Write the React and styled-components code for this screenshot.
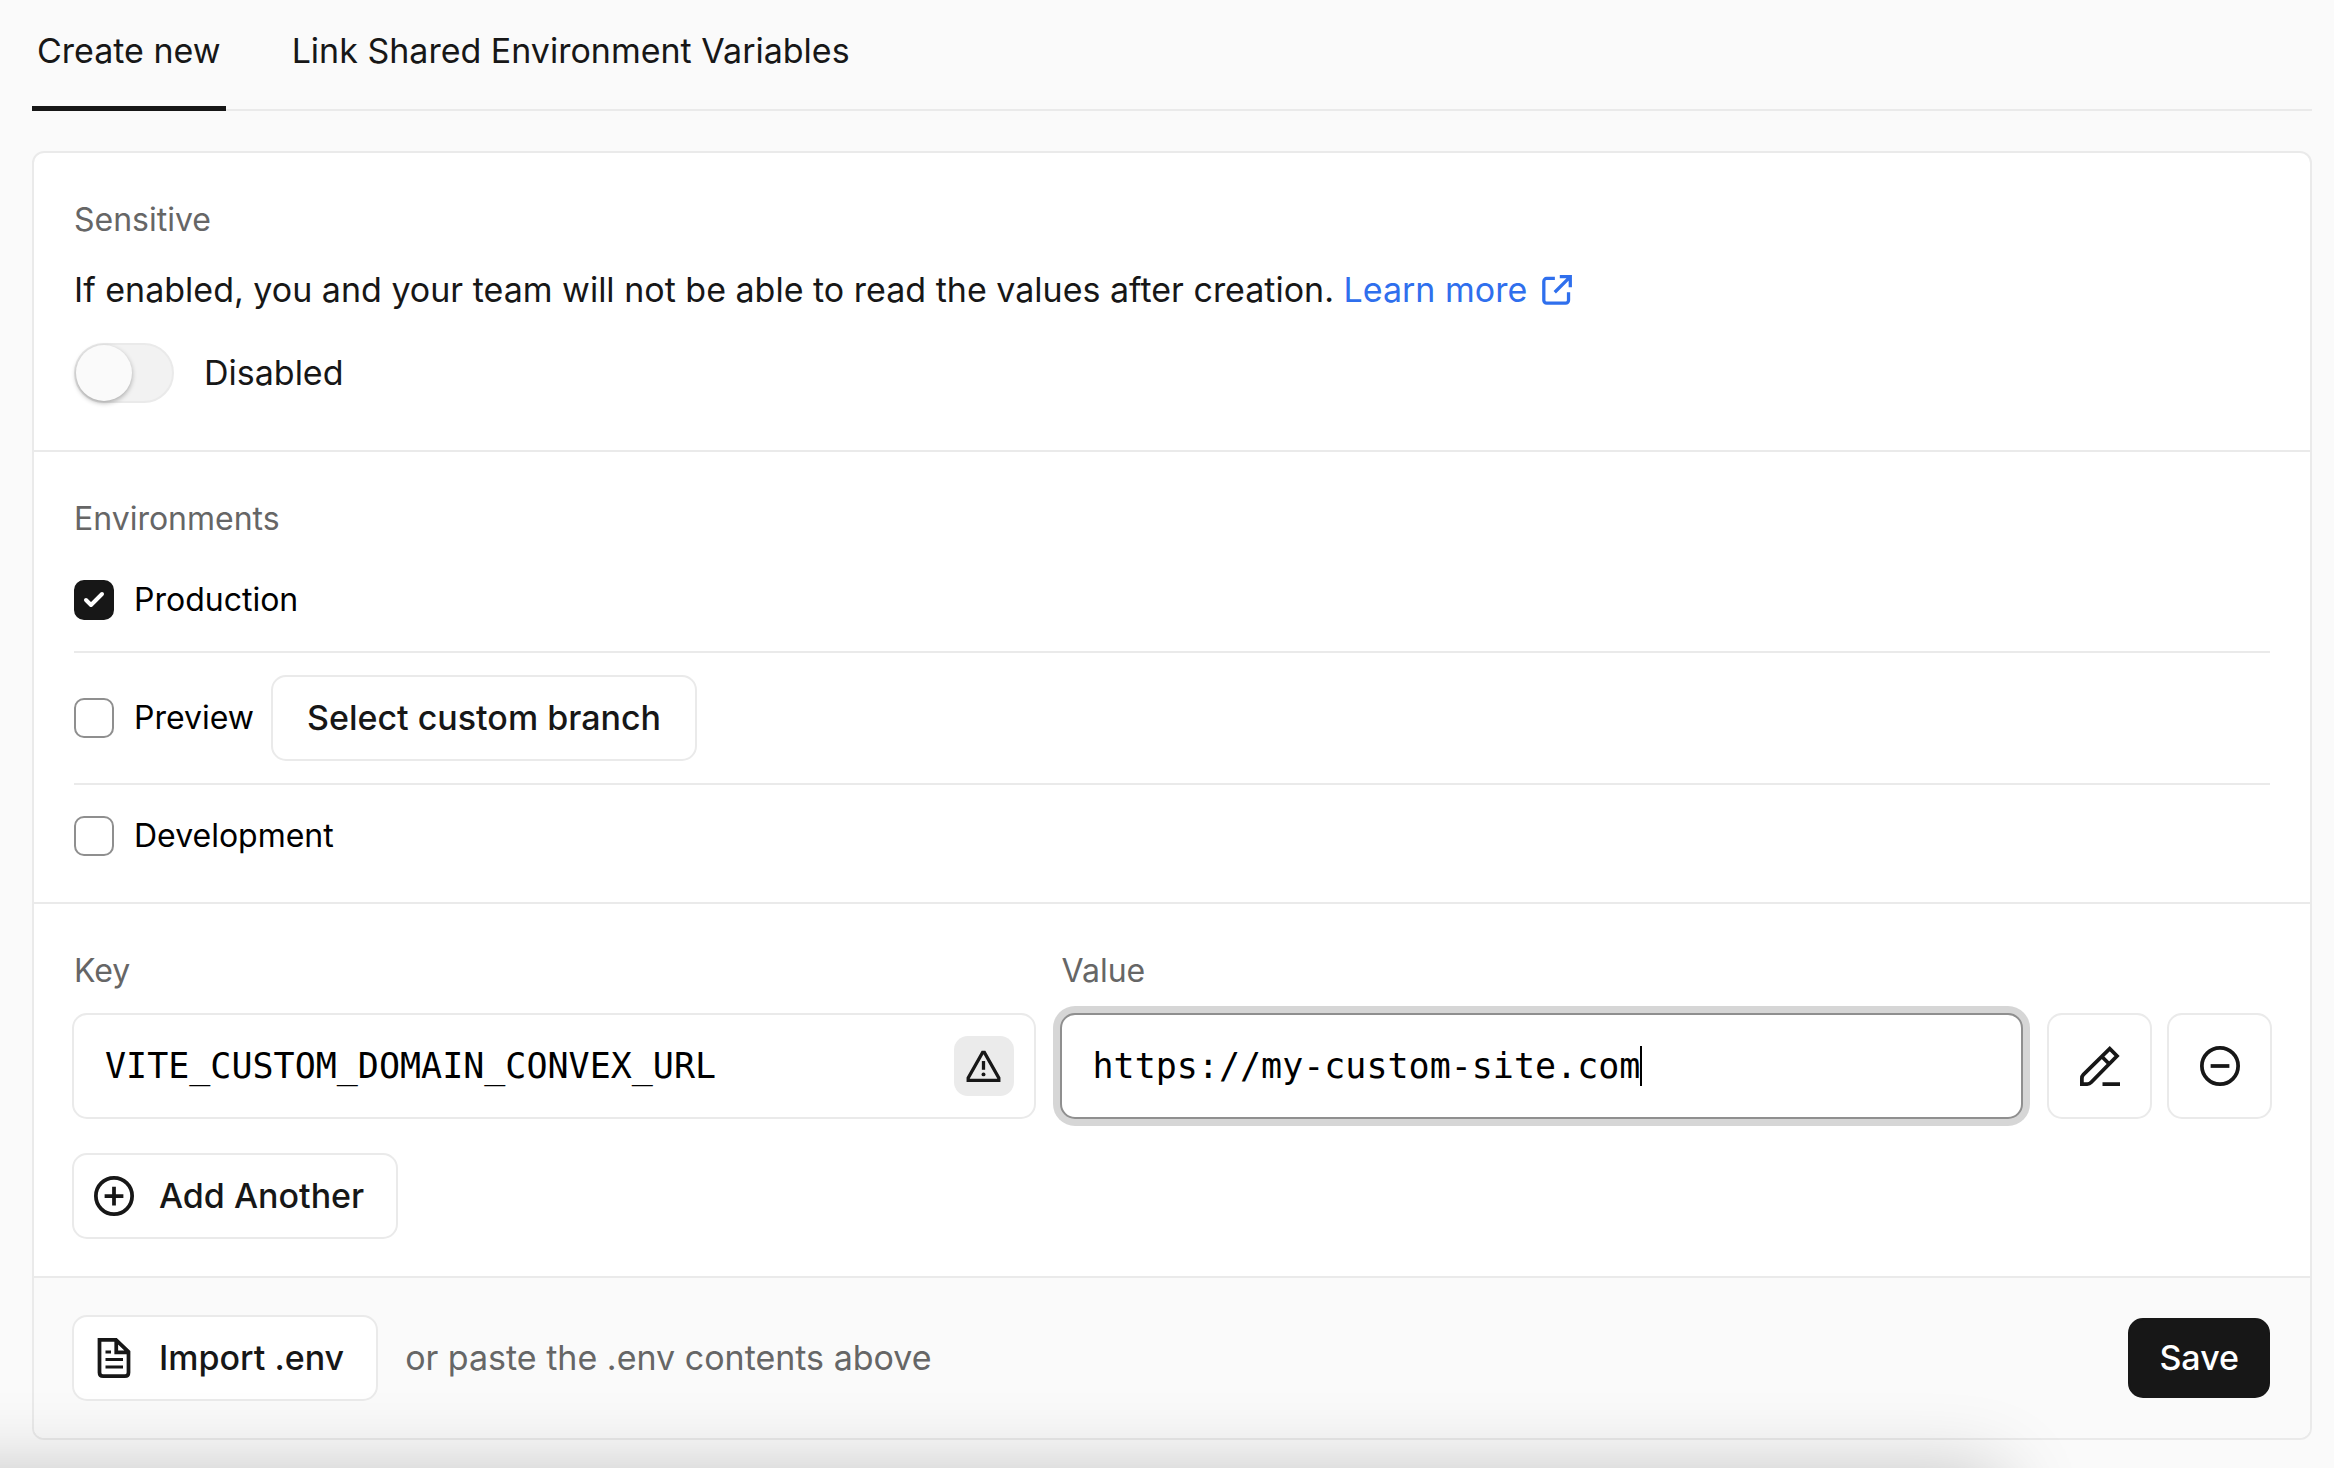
import React, { useState } from "react";
import styled, { createGlobalStyle } from "styled-components";

const sans = `Inter, "Liberation Sans", sans-serif`;
const mono = `"DejaVu Sans Mono", "Liberation Mono", monospace`;

const Global = createGlobalStyle`
  * { box-sizing: border-box; }
  body {
    margin: 0;
    background: #fafafa;
    color: #171717;
    font-family: ${sans};
    font-size: 34px;
    line-height: 50px;
  }
  button, input { font: inherit; color: inherit; }
`;

const Page = styled.main`
  padding: 0 22px 28px 32px;
`;

const Tabs = styled.nav`
  display: flex;
  gap: 61px;
  height: 111px;
  border-bottom: 2px solid #eaeaea;
`;

const Tab = styled.button`
  margin-bottom: -2px;
  padding: 0 5px 5px;
  border: 0;
  border-bottom: 5px solid ${(p) => (p.$active ? "#171717" : "transparent")};
  background: none;
`;

const Card = styled.form`
  margin-top: 40px;
  border: 2px solid #eaeaea;
  border-radius: 12px;
  background: #fff;
  overflow: hidden;
`;

const Section = styled.section`
  padding: 42px ${(p) => p.$side || 40}px ${(p) => p.$bottom}px;
  border-bottom: 2px solid #eaeaea;
`;

const Caption = styled.h2`
  margin: 0;
  color: #666;
  font-size: 32px;
  font-weight: 400;
  line-height: 50px;
`;

const Description = styled.p`
  margin: 20px 0 28px;
`;

const Link = styled.a`
  color: #2f6fed;
  text-decoration: none;

  svg {
    width: 35px;
    height: 35px;
    margin-left: 12px;
    vertical-align: -6px;
  }
`;

const SwitchLabel = styled.label`
  display: flex;
  align-items: center;
  gap: 30px;
  width: max-content;
`;

const Switch = styled.input`
  appearance: none;
  width: 100px;
  height: 60px;
  margin: 0;
  padding: 0;
  border: 2px solid #eaeaea;
  border-radius: 30px;
  background: #f2f2f2;

  &::before {
    content: "";
    display: block;
    width: 56px;
    height: 56px;
    border-radius: 50%;
    background: #fafafa;
    box-shadow: 0 2px 5px rgba(0, 0, 0, 0.3);
  }
  &:checked::before { margin-left: 40px; }
`;

const Environments = styled.ul`
  margin: 5px 0 0;
  padding: 0;
  list-style: none;
`;

const Environment = styled.li`
  box-sizing: content-box;
  display: flex;
  align-items: center;
  gap: 17px;
  height: ${(p) => (p.$tall ? 130 : 102)}px;

  & + & { border-top: 2px solid #eaeaea; }
`;

const CheckLabel = styled.label`
  display: flex;
  align-items: center;
  gap: 20px;
  color: #000;
  font-size: 32px;
`;

const CheckBox = styled.span`
  display: grid;
  width: 40px;
  height: 40px;

  > * { grid-area: 1 / 1; }
  svg { width: 40px; height: 40px; pointer-events: none; }
`;

const CheckInput = styled.input`
  appearance: none;
  width: 40px;
  height: 40px;
  margin: 0;
  border: 2px solid #8f8f8f;
  border-radius: 10px;
  background: #fff;

  &:checked { border-color: #171717; background: #171717; }
`;

const Button = styled.button`
  display: flex;
  align-items: center;
  gap: 25px;
  height: 86px;
  padding: ${(p) => (p.$icon ? "0 32px 0 20px" : "0 34px")};
  border: 2px solid #eaeaea;
  border-radius: 15px;
  background: #fff;
  font-weight: 500;
  white-space: nowrap;

  svg { width: 40px; height: 40px; flex: none; }
`;

const SaveButton = styled(Button)`
  height: 80px;
  margin-left: auto;
  padding: 0 29px;
  border-color: #171717;
  background: #171717;
  color: #fff;
`;

const Variable = styled.div`
  display: flex;
  align-items: flex-end;
  gap: 24px;
  margin-bottom: 34px;
`;

const Column = styled.div`
  display: flex;
  flex: 1 1 0;
  flex-direction: column;
  gap: 17px;
  min-width: 0;
`;

const Actions = styled.div`
  display: flex;
  gap: 15px;
`;

const FieldLabel = styled.label`
  padding-left: 2px;
  color: #666;
  font-size: 32px;
  line-height: 50px;
`;

const Field = styled.div`
  display: flex;
  align-items: center;
  height: 106px;
  padding: 0 20px 0 31px;
  border: 2px solid ${(p) => (p.$focused ? "#8f8f8f" : "#eaeaea")};
  border-radius: 15px;
  background: #fff;
  box-shadow: ${(p) => (p.$focused ? "0 0 0 7px #d6d6d6" : "none")};
`;

const TextInput = styled.input`
  min-width: 0;
  padding: 0;
  border: 0;
  outline: 0;
  background: none;
  color: #000;
  caret-color: transparent;
  font-family: ${mono};
  font-size: 35px;
  field-sizing: ${(p) => (p.$fit ? "content" : "fixed")};
  flex: ${(p) => (p.$fit ? "none" : "1")};
`;

const Caret = styled.span`
  width: 2px;
  height: 40px;
  background: #000;
`;

const Warning = styled.button`
  display: grid;
  flex: none;
  place-items: center;
  width: 60px;
  height: 60px;
  padding: 0;
  border: 0;
  border-radius: 14px;
  background: #ebebeb;

  svg { width: 35px; height: 35px; }
`;

const IconButton = styled(Button)`
  justify-content: center;
  width: 105px;
  height: 106px;
  padding: 0;
`;

const Footer = styled.footer`
  display: flex;
  align-items: center;
  gap: 27px;
  height: 160px;
  padding: 0 40px 0 38px;
  background: #fafafa;
`;

const Hint = styled.span`
  color: #666;
`;

const BottomShade = styled.div`
  position: fixed;
  top: 100%;
  left: -200px;
  right: 332px;
  height: 200px;
  box-shadow: 0 5px 80px rgba(0, 0, 0, 0.23);
  pointer-events: none;
`;

const Icon = ({ children }) => (
  <svg viewBox="0 0 16 16" fill="none" stroke="currentColor" strokeWidth="1.5" aria-hidden="true">
    {children}
  </svg>
);

const ExternalIcon = () => (
  <Icon>
    <path d="M7.25 2.5H3.5a1.3 1.3 0 0 0-1.3 1.3v8.7a1.3 1.3 0 0 0 1.3 1.3h8.7a1.3 1.3 0 0 0 1.3-1.3V8.8M9.5 1.7h4.8v4.8M14 2 7.2 8.8" />
  </Icon>
);
const WarningIcon = () => (
  <Icon>
    <path d="M7.6 1.6h.8L15 13.2v1.1H1v-1.1Z" />
    <path d="M8 5.5v4" />
    <circle cx="8" cy="11.6" r="0.9" fill="currentColor" stroke="none" />
  </Icon>
);
const PencilIcon = () => (
  <Icon>
    <path d="M.75 15.25v-2.3q0-.9.6-1.5L11.9 1.1l2.9 2.9L4.5 14.5q-.7.75-1.6.75ZM8.7 4.2l2.9 2.9M9 15.25h7" />
  </Icon>
);
const MinusIcon = () => (
  <Icon>
    <circle cx="8" cy="8" r="7.25" />
    <path d="M4.25 8h7.5" />
  </Icon>
);
const PlusIcon = () => (
  <Icon>
    <circle cx="8" cy="8" r="7.25" />
    <path d="M4.25 8h7.5M8 4.25v7.5" />
  </Icon>
);
const FileIcon = () => (
  <Icon>
    <path d="M2.2.75h6.6l5 4.8v8.2q0 1.5-1.5 1.5h-8.6q-1.5 0-1.5-1.5ZM8.9 1v4.75h4.75" />
    <path strokeWidth="1.2" d="M4.6 5.6h2.2M4.6 8.6h7M4.6 11.6h7" />
  </Icon>
);
const CheckIcon = () => (
  <svg viewBox="0 0 20 20" fill="none" stroke="#fff" strokeWidth="2" strokeLinecap="round" strokeLinejoin="round" aria-hidden="true">
    <path d="M14 7l-5.5 5.5L6 10" />
  </svg>
);

function EnvironmentRow({ name, initial, tall, children }) {
  const [checked, setChecked] = useState(Boolean(initial));
  return (
    <Environment $tall={tall}>
      <CheckLabel>
        <CheckBox>
          <CheckInput type="checkbox" checked={checked} onChange={(e) => setChecked(e.target.checked)} />
          {checked && <CheckIcon />}
        </CheckBox>
        {name}
      </CheckLabel>
      {children}
    </Environment>
  );
}

export default function App() {
  const [sensitive, setSensitive] = useState(false);
  return (
    <>
      <Global />
      <Page>
        <Tabs>
          <Tab type="button" $active>Create new</Tab>
          <Tab type="button">Link Shared Environment Variables</Tab>
        </Tabs>
        <Card onSubmit={(e) => e.preventDefault()}>
          <Section $bottom={47}>
            <Caption>Sensitive</Caption>
            <Description>
              If enabled, you and your team will not be able to read the values after creation.{" "}
              <Link href="#learn-more">Learn more<ExternalIcon /></Link>
            </Description>
            <SwitchLabel>
              <Switch type="checkbox" role="switch" checked={sensitive} onChange={(e) => setSensitive(e.target.checked)} />
              {sensitive ? "Enabled" : "Disabled"}
            </SwitchLabel>
          </Section>
          <Section $bottom={15}>
            <Caption>Environments</Caption>
            <Environments>
              <EnvironmentRow name="Production" initial />
              <EnvironmentRow name="Preview" tall>
                <Button type="button">Select custom branch</Button>
              </EnvironmentRow>
              <EnvironmentRow name="Development" />
            </Environments>
          </Section>
          <Section $side={38} $bottom={37}>
            <Variable>
              <Column>
                <FieldLabel htmlFor="key">Key</FieldLabel>
                <Field>
                  <TextInput id="key" defaultValue="VITE_CUSTOM_DOMAIN_CONVEX_URL" spellCheck={false} />
                  <Warning type="button" aria-label="Warning"><WarningIcon /></Warning>
                </Field>
              </Column>
              <Column>
                <FieldLabel htmlFor="value">Value</FieldLabel>
                <Field $focused>
                  <TextInput id="value" $fit defaultValue="https://my-custom-site.com" spellCheck={false} />
                  <Caret />
                </Field>
              </Column>
              <Actions>
                <IconButton type="button" aria-label="Add note"><PencilIcon /></IconButton>
                <IconButton type="button" aria-label="Remove"><MinusIcon /></IconButton>
              </Actions>
            </Variable>
            <Button type="button" $icon><PlusIcon />Add Another</Button>
          </Section>
          <Footer>
            <Button type="button" $icon><FileIcon />Import .env</Button>
            <Hint>or paste the .env contents above</Hint>
            <SaveButton type="submit">Save</SaveButton>
          </Footer>
        </Card>
      </Page>
      <BottomShade />
    </>
  );
}
